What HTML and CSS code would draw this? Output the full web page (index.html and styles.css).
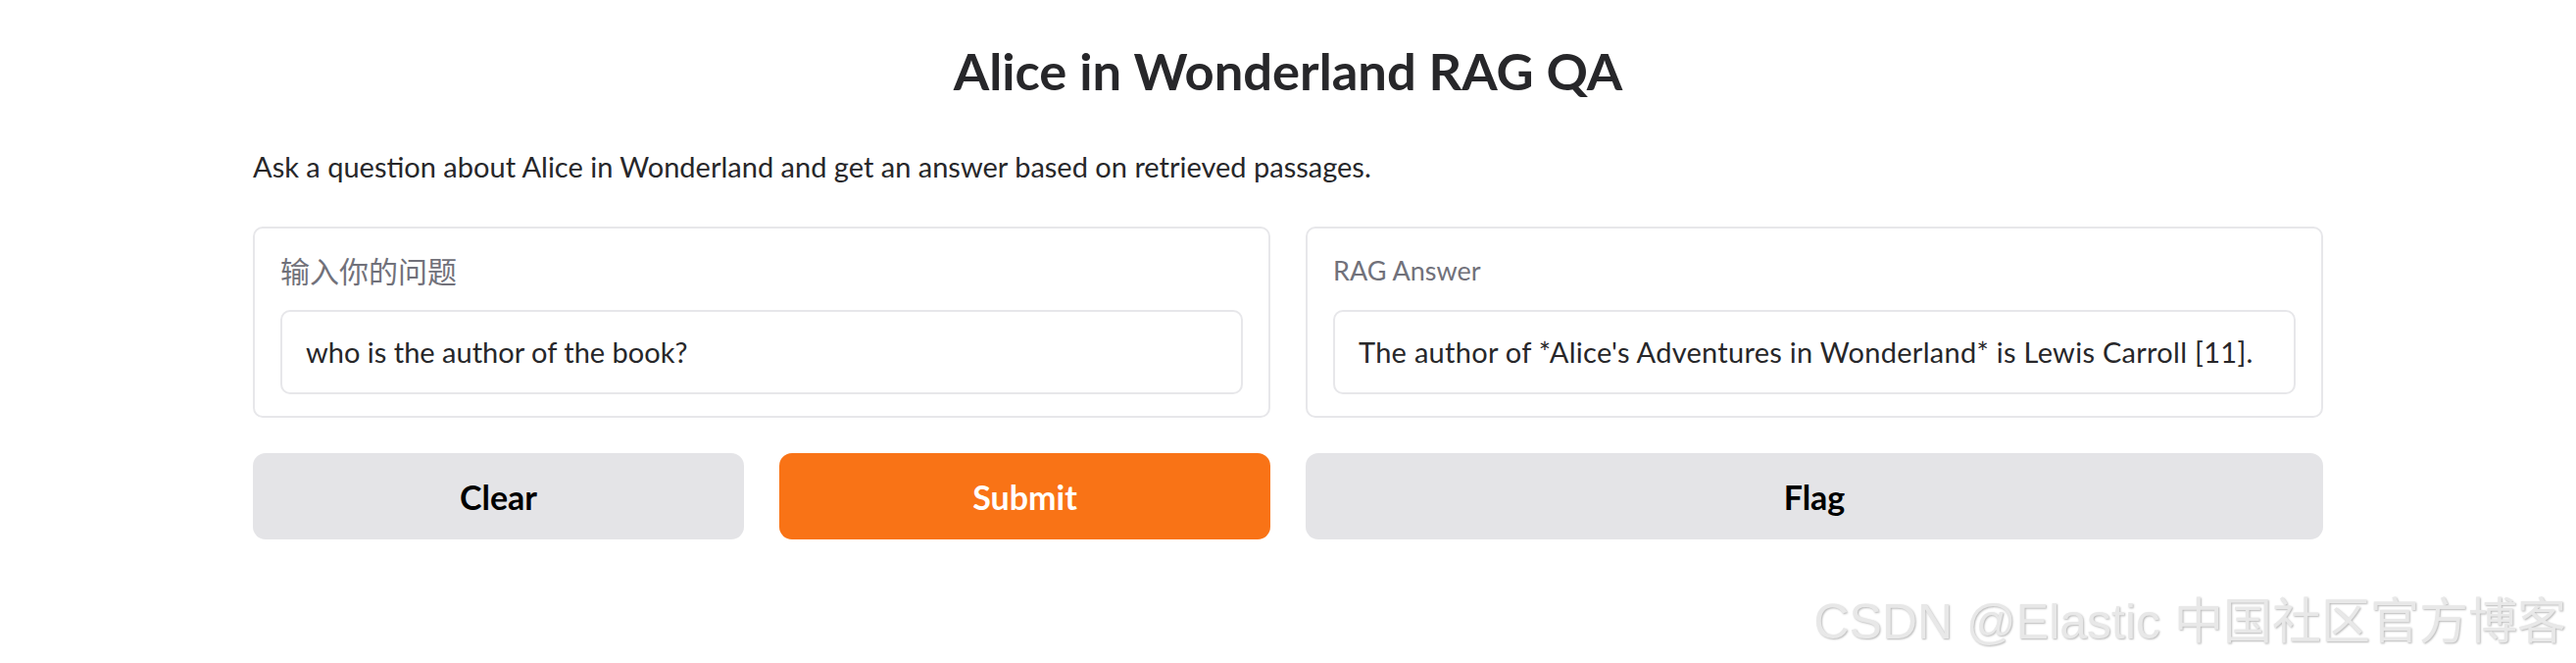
FILE: index.html
```html
<!DOCTYPE html>
<html lang="en">
<head>
<meta charset="utf-8">
<title>Alice in Wonderland RAG QA</title>
<link rel="stylesheet" href="styles.css">
</head>
<body>
<main class="app">
  <h1 class="title">Alice in Wonderland RAG QA</h1>
  <p class="desc">Ask a question about Alice in Wonderland and get an answer based on retrieved passages.</p>
  <div class="columns">
    <div class="col">
      <div class="card">
        <label class="label label-cjk">输入你的问题</label>
        <div class="field">who is the author of the book?</div>
      </div>
      <div class="btn-row">
        <button class="btn btn-secondary">Clear</button>
        <button class="btn btn-primary">Submit</button>
      </div>
    </div>
    <div class="col">
      <div class="card">
        <label class="label">RAG Answer</label>
        <div class="field field-answer">The author of *Alice's Adventures in Wonderland* is Lewis Carroll [11].</div>
      </div>
      <div class="btn-row">
        <button class="btn btn-secondary">Flag</button>
      </div>
    </div>
  </div>
</main>
<div class="watermark">CSDN @Elastic 中国社区官方博客</div>
</body>
</html>
```

FILE: styles.css
```css
html, body {
  margin: 0;
  padding: 0;
  background: #ffffff;
}
body {
  font-family: Lato, "Noto Sans CJK SC", sans-serif;
  color: #27272a;
  width: 2628px;
  height: 676px;
  overflow: hidden;
  position: relative;
}
.app {
  width: 2112px;
  margin: 0 auto;
  padding-top: 40px;
}
.title {
  margin: 0;
  text-align: center;
  font-size: 52.5px;
  line-height: 64px;
  font-weight: 700;
  color: #27272a;
}
.desc {
  margin: 48px 0 0 0;
  font-size: 29px;
  line-height: 36px;
  color: #27272a;
}
.columns {
  margin-top: 43px;
  display: grid;
  grid-template-columns: 1fr 1fr;
  gap: 36px;
}
.col {
  display: flex;
  flex-direction: column;
  gap: 36px;
}
.card {
  border: 2px solid #e7e7ea;
  border-radius: 10px;
  padding: 25px 26px 22px 26px;
  display: flex;
  flex-direction: column;
  gap: 22px;
}
.label {
  font-size: 27px;
  line-height: 36px;
  height: 36px;
  color: #71717a;
  font-family: Lato, "Noto Sans CJK SC", sans-serif;
}
.label-cjk {
  font-size: 30px;
}
.field {
  border: 2px solid #e7e7ea;
  border-radius: 10px;
  height: 82px;
  padding: 0 24px;
  display: flex;
  align-items: center;
  font-size: 29px;
  line-height: 36px;
  color: #27272a;
  white-space: nowrap;
  overflow: hidden;
}
.field-answer {
  letter-spacing: 0.28px;
}
.btn-row {
  display: flex;
  gap: 36px;
}
.btn {
  flex: 1;
  height: 88px;
  border: none;
  border-radius: 13px;
  font-family: Lato, sans-serif;
  font-size: 34px;
  font-weight: 700;
  padding: 0;
}
.btn-secondary {
  background: #e4e4e7;
  color: #000000;
}
.btn-primary {
  background: #f97316;
  color: #ffffff;
}
.watermark {
  position: absolute;
  right: 10px;
  bottom: 17px;
  font-family: "Liberation Sans", "Noto Sans CJK SC", sans-serif;
  font-size: 50px;
  line-height: 50px;
  color: #e8e8e8;
  text-shadow: 1px 1px 2px rgba(0, 0, 0, 0.28);
  white-space: nowrap;
}
```
